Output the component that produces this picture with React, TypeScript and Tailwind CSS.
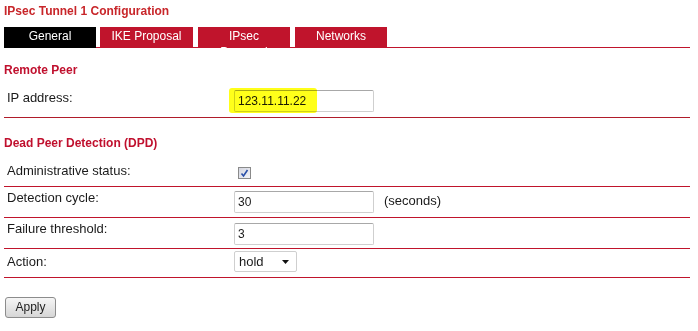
import React from 'react';

const font = { fontFamily: '"Liberation Sans", Arial, sans-serif' };

const tabs = [
  { label: 'General', active: true, cls: 'w-[92px]' },
  { label: 'IKE Proposal', active: false, cls: 'w-[93px] ml-[4px]' },
  { label: 'IPsec', second: 'Proposal', active: false, cls: 'w-[92px] ml-[5px]' },
  { label: 'Networks', active: false, cls: 'w-[92px] ml-[5px]' },
];

function TextInput({ value }: { value: string }) {
  return (
    <div className="w-[140px] h-[22px] border border-[#cfcfcf] border-t-[#a8a8a8] rounded-[2px] bg-white pl-[3px] text-[12px] leading-[20px] text-[#1a1a1a]">
      {value}
    </div>
  );
}

function Row({ h, label, lpt, children }: { h: string; label: string; lpt: string; children: React.ReactNode }) {
  return (
    <div className={`flex border-b border-[#c0142c] pl-[3px] ${h}`}>
      <div className={`w-[227px] text-[13px] leading-[15px] text-[#1a1a1a] ${lpt}`}>{label}</div>
      {children}
    </div>
  );
}

export default function App() {
  return (
    <div className="w-[698px] h-[331px] bg-white overflow-hidden" style={font}>
      {/* Title */}
      <div className="h-[27px] pl-[4px] pt-[4px] text-[12px] leading-[14px] font-bold text-[#c8262a]">
        IPsec Tunnel 1 Configuration
      </div>

      {/* Tabs */}
      <div className="ml-[4px] w-[686px] h-[21px] flex border-b border-[#c0142c]">
        {tabs.map((t) => (
          <div
            key={t.label}
            className={`${t.cls} h-[21px] shrink-0 pt-[2px] text-center text-[12px] leading-[14px] text-white ${t.active ? 'bg-black' : 'bg-[#c0142c]'}`}
          >
            {t.label}
            {t.second && <div className="mt-[2px]">{t.second}</div>}
          </div>
        ))}
      </div>

      <div className="ml-[4px] w-[686px]">
        {/* Remote Peer */}
        <div className="h-[30px] pt-[15px] text-[12px] leading-[14px] font-bold text-[#c0102e]">Remote Peer</div>
        <div className="flex h-[40px] border-b border-[#b01c2a] pl-[3px]">
          <div className="w-[227px] pt-[12px] text-[13px] leading-[15px] text-[#1a1a1a]">IP address:</div>
          <div className="relative mt-[12px]">
            <TextInput value="123.11.11.22" />
            <span className="absolute left-[-5px] top-[-2px] w-[88px] h-[25px] rounded-[3px] bg-[#ffff1a] mix-blend-multiply" />
          </div>
        </div>

        {/* Dead Peer Detection */}
        <div className="h-[41px] pt-[18px] text-[12px] leading-[14px] font-bold text-[#c0102e]">Dead Peer Detection (DPD)</div>
        <Row h="h-[28px]" label="Administrative status:" lpt="pt-[4px]">
          <div className="ml-[4px] mt-[8px] w-[13px] h-[12px] border border-[#8a8a8a] bg-gradient-to-br from-[#d4d6e0] to-[#f4f4f8] flex items-center justify-center">
            <svg width="9" height="9" viewBox="0 0 9 9">
              <path d="M1.5 4.5 L3.5 7 L7.5 1" fill="none" stroke="#2a4fa8" strokeWidth="1.6" />
            </svg>
          </div>
        </Row>
        <Row h="h-[31px]" label="Detection cycle:" lpt="pt-[3px]">
          <div className="mt-[4px]">
            <TextInput value="30" />
          </div>
          <div className="ml-[10px] mt-[6px] text-[13px] leading-[15px] text-[#1a1a1a]">(seconds)</div>
        </Row>
        <Row h="h-[31px]" label="Failure threshold:" lpt="pt-[3px]">
          <div className="mt-[5px]">
            <TextInput value="3" />
          </div>
        </Row>
        <Row h="h-[29px]" label="Action:" lpt="pt-[5px]">
          <div className="mt-[2px] w-[63px] h-[21px] border border-[#cfcfcf] rounded-[2px] bg-white pl-[4px] pr-[7px] flex items-center justify-between text-[13px] leading-[15px] text-[#1a1a1a]">
            <span>hold</span>
            <svg width="7" height="4" viewBox="0 0 7 4">
              <path d="M0 0 H7 L3.5 4 Z" fill="#111" />
            </svg>
          </div>
        </Row>
      </div>

      {/* Apply */}
      <button className="ml-[5px] mt-[19px] w-[51px] h-[21px] border border-[#8c8c8c] rounded-[3px] bg-gradient-to-b from-[#f6f6f6] to-[#d6d6d6] text-[12px] leading-[15px] text-[#222]">
        Apply
      </button>
    </div>
  );
}
